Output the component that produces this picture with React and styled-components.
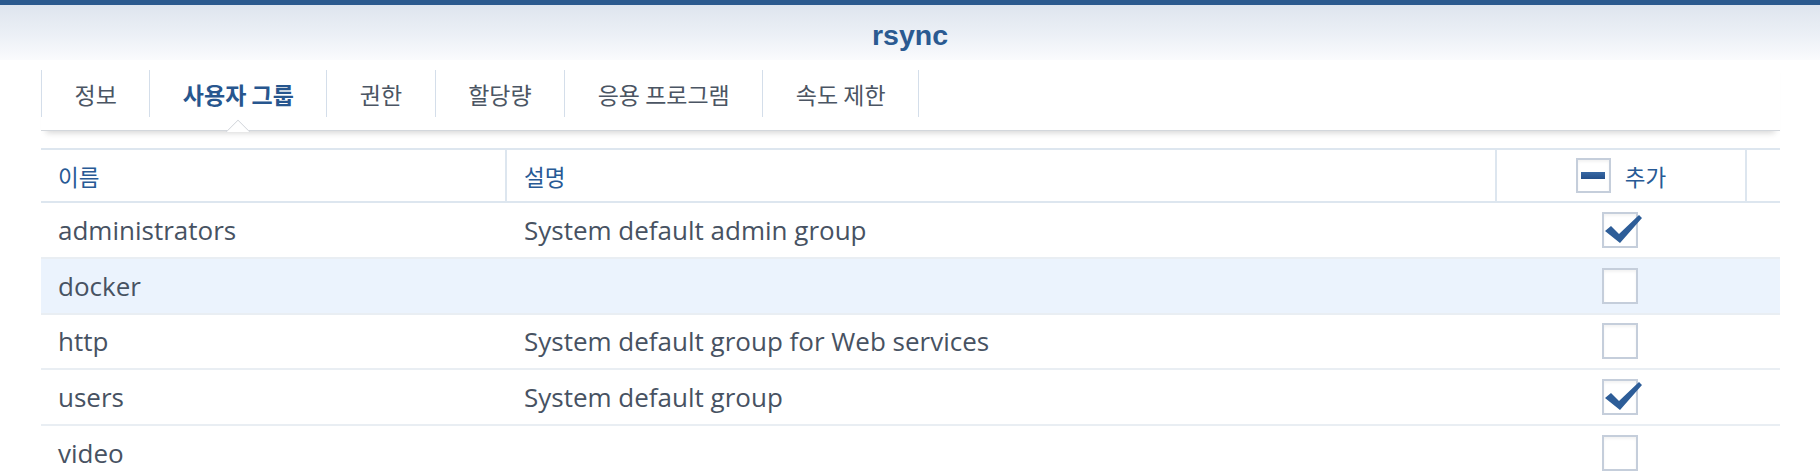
import React from "react";
import styled, { createGlobalStyle, css } from "styled-components";

const GlobalStyle = createGlobalStyle`
  body {
    margin: 0;
    background: #fff;
  }
`;

const KR = `"Noto Sans CJK KR", "Noto Sans", sans-serif`;
const LATIN = `"Open Sans", "Noto Sans CJK KR", sans-serif`;

const tabs = ["정보", "사용자 그룹", "권한", "할당량", "응용 프로그램", "속도 제한"];

const groups = [
  { name: "administrators", desc: "System default admin group", checked: true },
  { name: "docker", desc: "", checked: false, selected: true },
  { name: "http", desc: "System default group for Web services", checked: false },
  { name: "users", desc: "System default group", checked: true },
  { name: "video", desc: "", checked: false },
];

function CheckMark() {
  return (
    <CheckSvg viewBox="0 0 44 36" width="44" height="36">
      <polygon points="3,19 9,14 17,22 37,3 40,6 18,31" fill="#2d5d98" />
    </CheckSvg>
  );
}

function App() {
  return (
    <Page>
      <GlobalStyle />
      <TitleBar>
        <Title>rsync</Title>
      </TitleBar>
      <TabBar>
        {tabs.map((t, i) => (
          <Tab key={t} active={i === 1}>
            {t}
          </Tab>
        ))}
      </TabBar>
      <Table>
        <HeaderRow>
          <HeaderCell>이름</HeaderCell>
          <HeaderCell>설명</HeaderCell>
          <HeaderCell center>
            <CheckBox small>
              <MinusBar />
            </CheckBox>
            추가
          </HeaderCell>
          <HeaderCell last />
        </HeaderRow>
        {groups.map((g) => (
          <Row key={g.name} selected={g.selected}>
            <Cell>{g.name}</Cell>
            <Cell>{g.desc}</Cell>
            <CheckCell>
              <CheckBox>{g.checked && <CheckMark />}</CheckBox>
            </CheckCell>
            <Cell />
          </Row>
        ))}
      </Table>
    </Page>
  );
}

const Page = styled.div`
  width: 1820px;
  background: #fff;
`;

const TitleBar = styled.header`
  border-top: 5px solid #2b5a8e;
  height: 49px;
  padding-top: 6px;
  background: linear-gradient(to bottom, #dee5ee 0%, #ecf0f6 55%, #fafbfd 100%);
  display: flex;
  align-items: center;
  justify-content: center;
`;

const Title = styled.div`
  font-family: "Liberation Sans", Arial, sans-serif;
  font-weight: 700;
  font-size: 28.5px;
  line-height: 1;
  color: #2a5a91;
`;

const TabBar = styled.nav`
  margin: 0 40px 0 41px;
  height: 71px;
  box-sizing: border-box;
  padding-top: 10px;
  display: flex;
  align-items: flex-start;
  background: #fff;
  border-bottom: 1px solid #d3d7dc;
  box-shadow: 0 7px 6px -5px rgba(0, 0, 0, 0.16);
`;

const Tab = styled.div`
  position: relative;
  height: 47px;
  padding: 0 32.5px;
  display: flex;
  align-items: center;
  border-right: 1px solid #d4deea;
  font-family: ${KR};
  font-size: 23px;
  color: #4b5563;
  white-space: nowrap;

  &:first-child {
    border-left: 1px solid #d4deea;
  }

  ${(props) =>
    props.active &&
    css`
      font-weight: 700;
      color: #27568e;

      &::after {
        content: "";
        position: absolute;
        left: 50%;
        top: 53px;
        width: 17px;
        height: 17px;
        margin-left: -9px;
        background: #fff;
        border-top: 1px solid #d3d7dc;
        border-left: 1px solid #d3d7dc;
        transform: rotate(45deg);
        clip-path: polygon(0 0, 100% 0, 0 100%);
      }
    `}
`;

const Table = styled.div`
  margin: 17px 40px 0 41px;
`;

const columns = `466px 990px 250px 1fr`;

const HeaderRow = styled.div`
  display: grid;
  grid-template-columns: ${columns};
  height: 51px;
  border-top: 2px solid #dde6ef;
  border-bottom: 2px solid #dde6ef;
`;

const HeaderCell = styled.div`
  display: flex;
  align-items: center;
  gap: 14px;
  box-sizing: border-box;
  padding-left: 17px;
  border-right: 2px solid #dde6ef;
  font-family: ${KR};
  font-size: 22.5px;
  color: #285a95;

  ${(props) =>
    props.center &&
    css`
      justify-content: center;
      padding-left: 0;
    `}

  ${(props) =>
    props.last &&
    css`
      border-right: none;
    `}
`;

const Row = styled.div`
  display: grid;
  grid-template-columns: ${columns};
  height: 53.75px;
  border-bottom: 2px solid #e9eef3;
  background: ${(props) => (props.selected ? "#ebf3fd" : "#fff")};
`;

const Cell = styled.div`
  display: flex;
  align-items: center;
  padding-left: 17px;
  font-family: ${LATIN};
  font-size: 26px;
  color: #475262;
  white-space: nowrap;
`;

const CheckCell = styled.div`
  display: flex;
  align-items: center;
  justify-content: center;
  padding-right: 4px;
`;

const CheckBox = styled.div`
  position: relative;
  width: ${(props) => (props.small ? "35px" : "36px")};
  height: ${(props) => (props.small ? "35px" : "36px")};
  box-sizing: border-box;
  border: 2px solid #c5cedb;
  background: #fff;
  box-shadow: inset 0 2px 3px rgba(0, 0, 0, 0.05);
  display: flex;
  align-items: center;
  justify-content: center;
  flex-shrink: 0;
`;

const MinusBar = styled.div`
  width: 24px;
  height: 7px;
  background: linear-gradient(to bottom, #3868a4, #24508a);
`;

const CheckSvg = styled.svg`
  position: absolute;
  left: -2px;
  top: -2px;
  overflow: visible;
`;

export default App;
